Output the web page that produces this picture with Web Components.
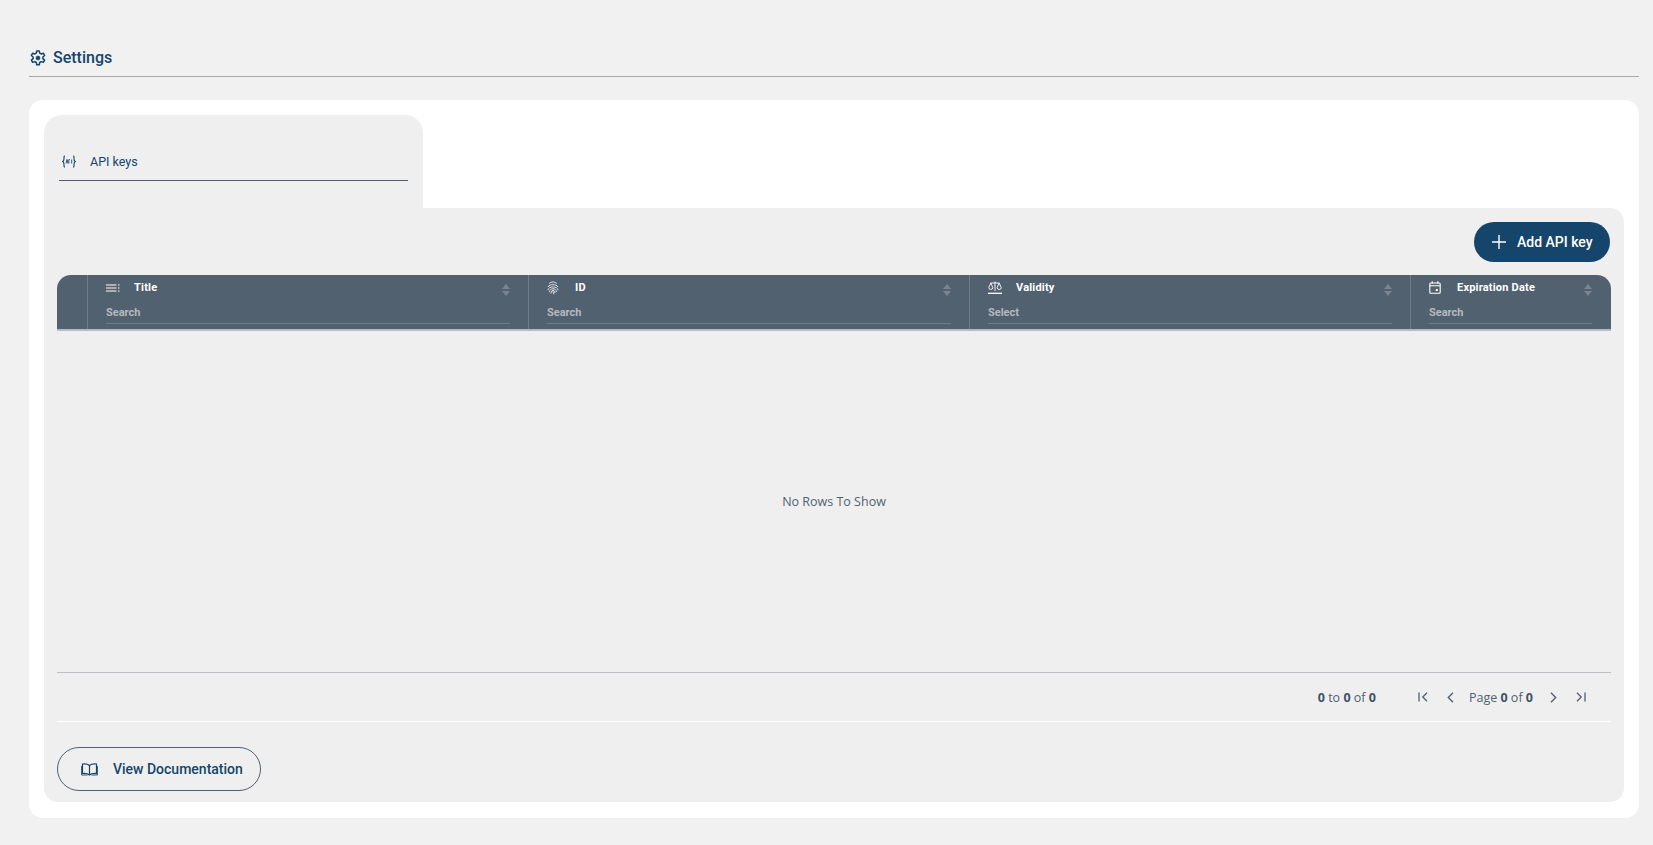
<!DOCTYPE html>
<html><head><meta charset="utf-8"><style>
html,body{margin:0;padding:0;background:#f1f1f1;height:845px;overflow:hidden;font-family:Roboto,sans-serif}
</style></head><body>
<app-page></app-page>
<script>
const ic={
gear:'<svg width="18" height="18" viewBox="0 0 24 24" fill="none" stroke="currentColor" stroke-width="2" stroke-linejoin="round"><path d="M10.3 2.5h3.4l.6 3 1.9 1.1 2.9-1 1.7 3-2.3 2v2.3l2.3 2-1.7 2.9-2.9-1-1.9 1.2-.6 3h-3.4l-.6-3-1.9-1.2-2.9 1-1.7-2.9 2.3-2v-2.3l-2.3-2 1.7-3 2.9 1 1.9-1.1z"/><circle cx="12" cy="12" r="2.6" fill="currentColor" stroke-width="1"/></svg>',
api:'<svg width="14" height="13" viewBox="0 0 14 13" fill="none" stroke="currentColor" stroke-width="1.1"><path d="M3 1C1.8 1 2 2 2 3.5S2 5.8.8 6.5C2 7.200 2 8 2 9.500S1.800 12 3 12M11 1c1.200 0 1 1 1 2.500s0 2.300 1.200 3C12 7.200 12 8 12 9.500S12.200 12 11 12"/><path d="M4 8.500 5 4.500l1 4M6.800 8.500V4.600h1M9.700 4.500v4" stroke-width=".9"/></svg>',
plus:'<svg width="14" height="14" viewBox="0 0 14 14" stroke="currentColor" stroke-width="1.400"><path d="M7 0v14M0 7h14"/></svg>',
lines:'<svg width="14" height="8" viewBox="0 0 14 8" stroke="currentColor" stroke-width="1.200" fill="none"><path d="M0 1h10.500M0 4h10.500M0 7h10.500"/><path d="M12 1h2M12 4h2M12 7h2" stroke-dasharray="1 .5" stroke-width="1"/></svg>',
finger:'<svg width="12" height="14" viewBox="0 0 12 14" stroke="currentColor" stroke-width=".8" fill="none"><path d="M2.200 2.500C4.500.5 7.500.5 9.800 2.500M1 6C2.500 2.800 9.500 2.800 11 6M1 9.200C1 4.800 11 4.800 11 9.200M2.500 11.200C2.500 6.500 9.500 6.500 9.500 11M4 12.500C4 8.500 8 8.500 8 12M6 8.500c0 1.500 0 3 1 4.800"/></svg>',
scale:'<svg width="14" height="13" viewBox="0 0 14 13" stroke="currentColor" fill="none" stroke-width=".9"><path d="M7 .5v9.500M2.500 2h9"/><path d="M0 12.300h14" stroke-width="1.300"/><path d="M2.800 2 .8 6.500a2 2 0 0 0 4 0zM11.200 2l-2 4.500a2 2 0 0 0 4 0z"/></svg>',
cal:'<svg width="12" height="13" viewBox="0 0 12 13" stroke="currentColor" fill="none" stroke-width="1.100"><rect x=".8" y="2" width="10.400" height="10.300" rx="1"/><path d="M.8 4.800h10.400M3.200 .3v2.500M8.800 .3v2.500"/><rect x="6.800" y="8" width="2" height="2" fill="currentColor" stroke="none"/></svg>',
book:'<svg width="17" height="13" viewBox="0 0 17 13" stroke="currentColor" fill="none" stroke-width="1.200"><path d="M8.500 2.500C7 1 4 .8 1.500 1v9.500c2.500-.2 5.500 0 7 1.500 1.500-1.500 4.500-1.700 7-1.500V1C13 .8 10 1 8.500 2.500zM8.500 2.500V12"/><path d="M.6 3v9h6M16.400 3v9h-6" stroke-width=".9"/></svg>',
first:'<svg width="10" height="10" viewBox="0 0 10 10" stroke="currentColor" fill="none" stroke-width="1.300"><path d="M1 .5v9M9 .8 4.800 5 9 9.200"/></svg>',
prev:'<svg width="7" height="11" viewBox="0 0 7 11" stroke="currentColor" fill="none" stroke-width="1.400"><path d="M6 .8 1.300 5.500 6 10.200"/></svg>',
next:'<svg width="7" height="11" viewBox="0 0 7 11" stroke="currentColor" fill="none" stroke-width="1.400"><path d="M1 .8 5.700 5.500 1 10.200"/></svg>',
last:'<svg width="10" height="10" viewBox="0 0 10 10" stroke="currentColor" fill="none" stroke-width="1.300"><path d="M9 .5v9M1 .8 5.200 5 1 9.200"/></svg>'
};
function def(n,html,attrs){customElements.define(n,class extends HTMLElement{connectedCallback(){if(this.shadowRoot)return;this.attachShadow({mode:'open'}).innerHTML=typeof html==='function'?html(this):html}})}
def('page-title',`<style>:host{display:flex;align-items:center;height:37px;border-bottom:1px solid #a9a9ad;color:#15456a;font:500 16px Roboto,sans-serif;gap:6px;padding-bottom:0;box-sizing:border-box}
svg{display:block;margin-top:-1px}span{margin-top:-2px}</style>${ic.gear}<span><slot></slot></span>`);
def('side-tab',`<style>:host{display:block;width:379px;height:93px;box-sizing:border-box;background:#efefef;border-radius:18px 18px 0 0;padding:0 15px}
.r{height:66px;border-bottom:1px solid #4f5e6e;box-sizing:border-box;display:flex;align-items:center;color:#15456a;font:400 12.500px Roboto,sans-serif;padding:27px 0 0 3px;gap:14px}
svg{display:block}</style><div class="r">${ic.api}<span><slot></slot></span></div>`);
def('primary-button',`<style>:host{display:inline-flex;align-items:center;height:40px;width:136px;box-sizing:border-box;background:#15456a;color:#fff;border-radius:20px;font:500 14px Roboto,sans-serif;padding-left:18px;gap:11px}svg{display:block}</style>${ic.plus}<span><slot></slot></span>`);
def('outline-button',`<style>:host{display:inline-flex;align-items:center;height:44px;width:204px;box-sizing:border-box;border:1px solid #4f6175;color:#15456a;border-radius:22px;font:500 14px Roboto,sans-serif;padding-left:23px;gap:15px}svg{display:block}</style>${ic.book}<span><slot></slot></span>`);
def('grid-col',el=>`<style>:host{display:block;box-sizing:border-box;border-left:1px solid #6f7c89;padding:0 18px;height:100%;color:#fff;width:${el.getAttribute('w')}px;flex:none}
.t{display:flex;align-items:center;height:25px;font:700 11px Roboto,sans-serif;position:relative;letter-spacing:.2px;padding-top:0}
.i{width:28px;flex:none;display:flex;align-items:center;justify-content:flex-start}.i svg{display:block}
.s{position:absolute;right:0;top:9px;width:8px;display:flex;flex-direction:column;gap:2px}
.u{border:4px solid transparent;border-top:0;border-bottom:5px solid #7a8590;width:0;height:0;margin:0}
.d{border:4px solid transparent;border-bottom:0;border-top:5px solid #7a8590;width:0;height:0}
.f{font:700 11px Roboto,sans-serif;color:#b4b9bf;height:23px;display:flex;align-items:center;margin-top:1px;border-bottom:1px solid #6f7c89;box-sizing:border-box;padding-top:1px}
</style><div class="t"><span class="i">${ic[el.getAttribute('icon')]}</span><span><slot></slot></span><span class="s"><span class="u"></span><span class="d"></span></span></div><div class="f">${el.getAttribute('ph')}</div>`);
def('grid-head',`<style>:host{display:flex;height:56px;box-sizing:border-box;background:#526170;border-radius:14px 14px 0 0;border-bottom:2px solid #b6bcc7;padding-left:30px}</style><slot></slot>`);
def('grid-pager',`<style>:host{display:flex;align-items:center;justify-content:flex-end;height:48px;border-top:1px solid #bdbdc4;border-bottom:1px solid #fff;color:#526170;font:400 12.500px "Open Sans",sans-serif;padding-right:25px;box-sizing:content-box}
b{font-weight:700;color:#3d5269}svg{display:block}.a{margin-right:42px}.b{display:flex;align-items:center}
.first{margin-right:19px}.prev{margin-right:15px}.next{margin:0 19px 0 17px}</style>
<span class="a"><b>0</b> to <b>0</b> of <b>0</b></span>
<span class="b"><span class="first">${ic.first}</span><span class="prev">${ic.prev}</span><span>Page <b>0</b> of <b>0</b></span><span class="next">${ic.next}</span><span>${ic.last}</span></span>`);
def('api-grid',`<style>:host{display:block}.b{height:341px;display:flex;align-items:center;justify-content:center;color:#526170;font:400 12.500px "Open Sans",sans-serif;padding-top:0}</style>
<grid-head>
<grid-col w="441" icon="lines" ph="Search">Title</grid-col>
<grid-col w="441" icon="finger" ph="Search">ID</grid-col>
<grid-col w="441" icon="scale" ph="Select">Validity</grid-col>
<grid-col w="200" icon="cal" ph="Search">Expiration Date</grid-col>
</grid-head>
<div class="b">No Rows To Show</div>
<grid-pager></grid-pager>`);
def('app-page',`<style>:host{display:block;padding:40px 14px 0 29px;width:1610px;color:#15456a}
.card{margin-top:23px;height:718px;background:#fff;border-radius:14px;padding:15px 15px 16px;box-sizing:border-box;display:flex;flex-direction:column}
.panel{flex:1;background:#efefef;border-radius:0 14px 14px 14px;padding:14px 13px 0;box-sizing:border-box;display:flex;flex-direction:column}
.top{display:flex;justify-content:flex-end;height:53px;padding-right:1px;box-sizing:border-box}
.bot{margin-top:25px}
</style>
<page-title>Settings</page-title>
<div class="card"><side-tab>API keys</side-tab>
<div class="panel"><div class="top"><primary-button>Add API key</primary-button></div>
<api-grid></api-grid>
<div class="bot"><outline-button>View Documentation</outline-button></div>
</div></div>`);
</script></body></html>
